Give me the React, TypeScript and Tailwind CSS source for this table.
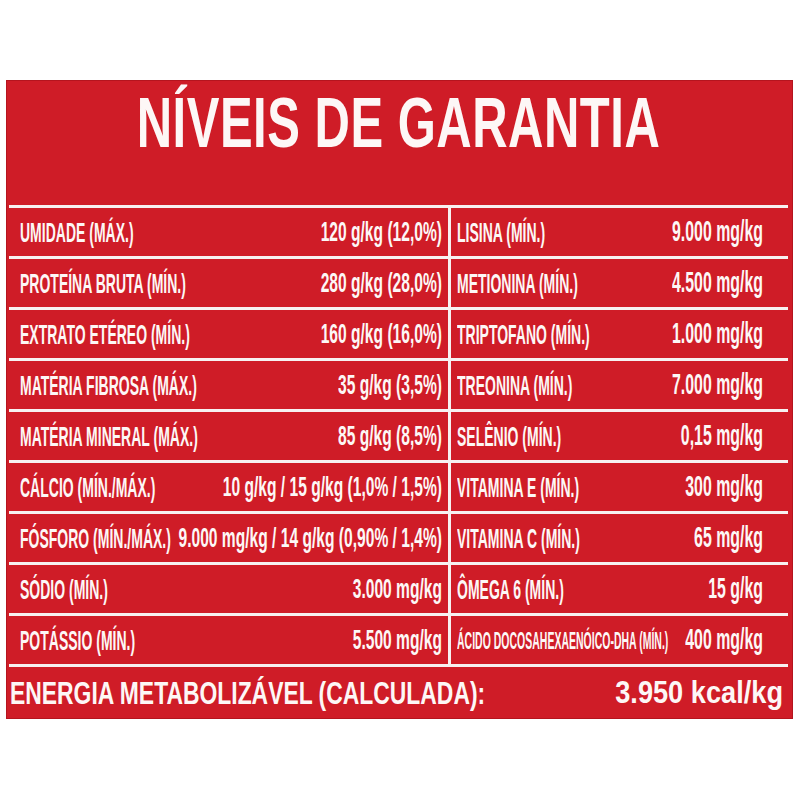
const leftRows = [
  { label: "UMIDADE (MÁX.)", value: "120 g/kg (12,0%)" },
  { label: "PROTEÍNA BRUTA (MÍN.)", value: "280 g/kg (28,0%)" },
  { label: "EXTRATO ETÉREO (MÍN.)", value: "160 g/kg (16,0%)" },
  { label: "MATÉRIA FIBROSA (MÁX.)", value: "35 g/kg (3,5%)" },
  { label: "MATÉRIA MINERAL (MÁX.)", value: "85 g/kg (8,5%)" },
  { label: "CÁLCIO (MÍN./MÁX.)", value: "10 g/kg / 15 g/kg (1,0% / 1,5%)" },
  { label: "FÓSFORO (MÍN./MÁX.)", value: "9.000 mg/kg / 14 g/kg (0,90% / 1,4%)" },
  { label: "SÓDIO (MÍN.)", value: "3.000 mg/kg" },
  { label: "POTÁSSIO (MÍN.)", value: "5.500 mg/kg" },
];

const rightRows = [
  { label: "LISINA (MÍN.)", value: "9.000 mg/kg" },
  { label: "METIONINA (MÍN.)", value: "4.500 mg/kg" },
  { label: "TRIPTOFANO (MÍN.)", value: "1.000 mg/kg" },
  { label: "TREONINA (MÍN.)", value: "7.000 mg/kg" },
  { label: "SELÊNIO (MÍN.)", value: "0,15 mg/kg" },
  { label: "VITAMINA E (MÍN.)", value: "300 mg/kg" },
  { label: "VITAMINA C (MÍN.)", value: "65 mg/kg" },
  { label: "ÔMEGA 6 (MÍN.)", value: "15 g/kg" },
  { label: "ÁCIDO DOCOSAHEXAENÓICO-DHA (MÍN.)", value: "400 mg/kg", small: true },
];

// condensed look: small font for the width, stretched vertically
function Label({ text, small }: { text: string; small?: boolean }) {
  if (small) {
    return (
      <span className="inline-block whitespace-nowrap text-[10.5px] leading-none scale-y-[2.35]">
        {text}
      </span>
    );
  }
  return (
    <span className="inline-block whitespace-nowrap text-[14px] leading-none scale-y-[2.04]">
      {text}
    </span>
  );
}

function Value({ text, size }: { text: string; size: "l" | "r" }) {
  return (
    <span
      className={
        size === "l"
          ? "inline-block whitespace-nowrap text-[15.6px] leading-none scale-y-[1.83]"
          : "inline-block whitespace-nowrap text-[15.9px] leading-none scale-y-[1.8]"
      }
    >
      {text}
    </span>
  );
}

export default function App() {
  return (
    <div className="h-[800px] w-[800px] overflow-hidden bg-white pt-[80px] pl-[6px] font-['Liberation_Sans',Arial,sans-serif] font-bold text-[#fdf7f6]">
      <div className="w-[787px] bg-[#cf1c27] pl-[3px] pr-[5px] shadow-[inset_0_0_0_1px_#b5141e]">
        <div className="h-[125px] pt-[19px] text-center">
          <span className="inline-block whitespace-nowrap text-[49px] leading-none tracking-[0.5px] scale-y-[1.43]">
            NÍVEIS DE GARANTIA
          </span>
        </div>

        <div className="h-[3px] bg-[#f7f1f1]" />

        {leftRows.map((row, i) => {
          const right = rightRows[i];
          return (
            <div key={row.label}>
              <div className="grid h-[48px] grid-cols-[439px_3px_1fr]">
                <div className="flex items-center justify-between pl-[11px] pr-[6px]">
                  <Label text={row.label} />
                  <Value text={row.value} size="l" />
                </div>
                <div className="bg-[#f7f1f1]" />
                <div className="flex items-center justify-between pl-[6px] pr-[25px]">
                  <Label text={right.label} small={right.small} />
                  <Value text={right.value} size="r" />
                </div>
              </div>
              <div className="h-[3px] bg-[#f7f1f1]" />
            </div>
          );
        })}

        <div className="flex h-[52px] items-center justify-between pl-[1px] pr-[5px]">
          <span className="inline-block whitespace-nowrap text-[22.9px] leading-none scale-y-[1.36]">
            ENERGIA METABOLIZÁVEL (CALCULADA):
          </span>
          <span className="inline-block whitespace-nowrap text-[27.2px] leading-none scale-y-[1.13]">
            3.950 kcal/kg
          </span>
        </div>
      </div>
    </div>
  );
}
